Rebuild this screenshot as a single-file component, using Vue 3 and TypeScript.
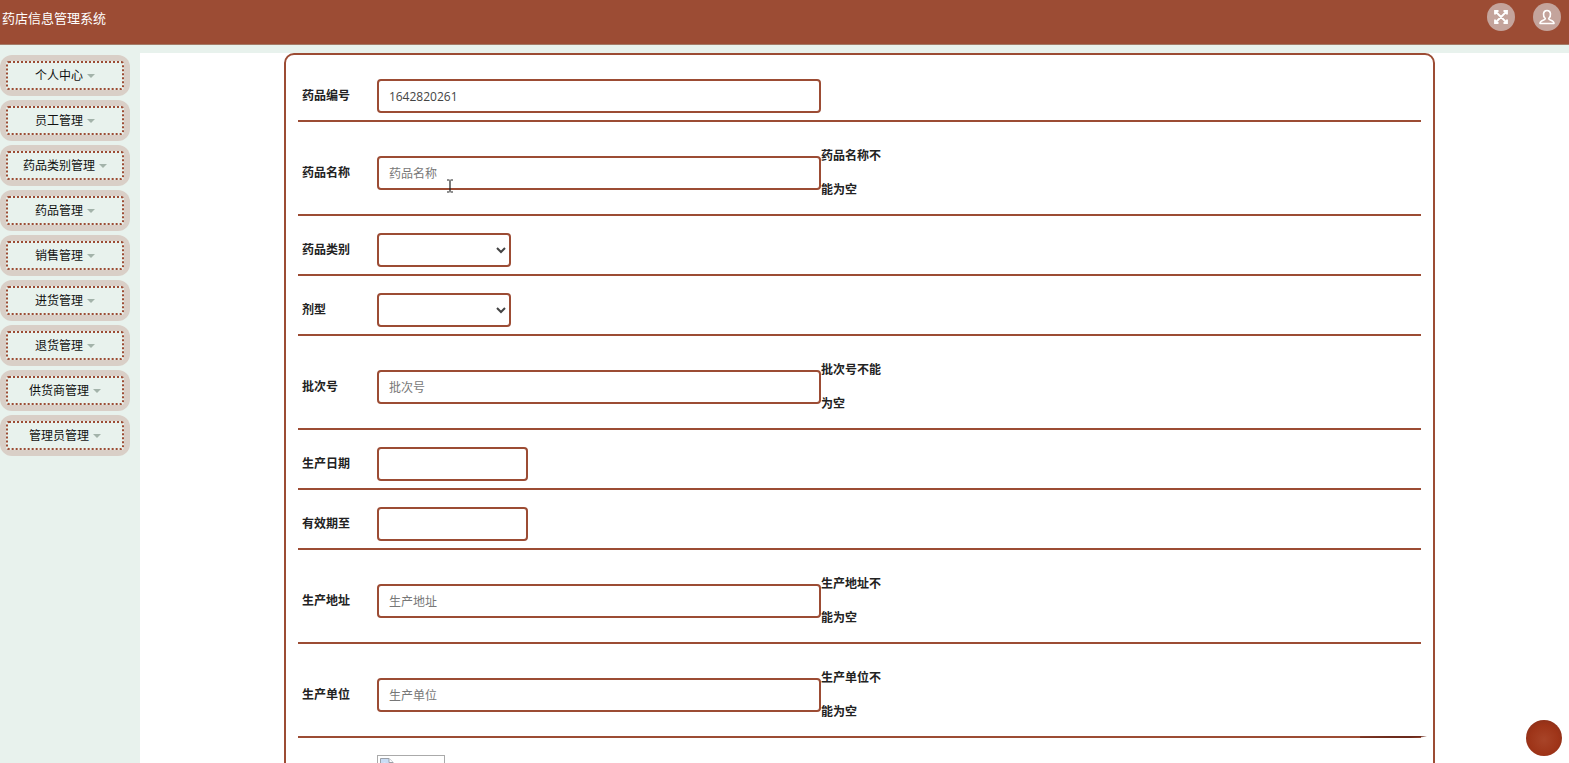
<script setup lang="ts">
import { ref } from 'vue'

interface Field {
  id: string
  label: string
  kind: 'text' | 'select' | 'date'
  value: string
  placeholder?: string
  error?: string
}

const menu: string[] = ['个人中心', '员工管理', '药品类别管理', '药品管理', '销售管理', '进货管理', '退货管理', '供货商管理', '管理员管理']

const fields = ref<Field[]>([
  { id: 'bianhao', label: '药品编号', kind: 'text', value: '1642820261' },
  { id: 'mingcheng', label: '药品名称', kind: 'text', value: '', placeholder: '药品名称', error: '药品名称不能为空' },
  { id: 'leibie', label: '药品类别', kind: 'select', value: '' },
  { id: 'jixing', label: '剂型', kind: 'select', value: '' },
  { id: 'pici', label: '批次号', kind: 'text', value: '', placeholder: '批次号', error: '批次号不能为空' },
  { id: 'shengchan', label: '生产日期', kind: 'date', value: '' },
  { id: 'youxiao', label: '有效期至', kind: 'date', value: '' },
  { id: 'dizhi', label: '生产地址', kind: 'text', value: '', placeholder: '生产地址', error: '生产地址不能为空' },
  { id: 'danwei', label: '生产单位', kind: 'text', value: '', placeholder: '生产单位', error: '生产单位不能为空' },
])
</script>

<template>
  <div class="page">
    <header class="topbar">
      <h1 class="title">药店信息管理系统</h1>
      <div class="actions">
        <button class="round" type="button" aria-label="全屏">
          <svg viewBox="0 0 28 28" width="28" height="28">
            <path d="M8 11.500V8h3.500M16.500 8H20v3.500M20 16.500V20h-3.500M11.500 20H8v-3.500M8.500 8.500l11 11M19.500 8.500l-11 11" fill="none" stroke="#fff" stroke-width="1.800" />
          </svg>
        </button>
        <button class="round" type="button" aria-label="用户">
          <svg viewBox="0 0 28 28" width="28" height="28">
            <path d="M12.300 15.500C9.800 13.500 9.500 7.500 14 7.500s4.200 6 1.700 8c0 2.200 5.300 1.500 5.300 5H7c0-3.500 5.300-2.800 5.300-5z" fill="none" stroke="#fff" stroke-width="1.600" stroke-linejoin="round" />
          </svg>
        </button>
      </div>
    </header>

    <div class="body">
      <nav class="sidebar">
        <button v-for="item in menu" :key="item" class="menu-item" type="button">
          <span class="menu-inner">{{ item }}<i class="caret"></i></span>
        </button>
      </nav>

      <main class="content">
        <form class="card" @submit.prevent>
          <div v-for="f in fields" :key="f.id" class="row">
            <label class="label" :for="f.id">{{ f.label }}</label>
            <select v-if="f.kind === 'select'" :id="f.id" v-model="f.value" class="control select"><option value=""></option></select>
            <input v-else :id="f.id" v-model="f.value" type="text" class="control" :class="f.kind" :placeholder="f.placeholder" />
            <span v-if="f.error" class="error">{{ f.error }}</span>
            <svg v-if="f.id === 'mingcheng'" class="pointer" viewBox="0 0 8 14" width="8" height="14">
              <path d="M1 1h2.500M4.500 1H7M4 1.500v11M1 13h2.500M4.500 13H7" fill="none" stroke="#222" stroke-width="1.200" />
            </svg>
            <svg v-if="f.id === 'danwei'" class="stroke" viewBox="0 0 68 4" width="68" height="4">
              <path d="M0 1.500L30 1 60 1l7 .8L50 3 0 2.800z" fill="#6b2a1c" />
            </svg>
          </div>
          <div class="row image-row">
            <span class="label"></span>
            <span class="thumb" role="img" aria-label="图片">
              <svg viewBox="0 0 16 16" width="16" height="16">
                <path d="M1.500 1.500h8.500l4 4v9H1.500z" fill="#c9dcf5" stroke="#9aa0a8" />
                <path d="M10 1.500v4h4" fill="#fff" stroke="#9aa0a8" />
                <path d="M3 8c0-3 5-3 5 0z" fill="#fff" />
                <path d="M2 14l5-5 7 5z" fill="#63a945" />
              </svg>
            </span>
          </div>
        </form>
      </main>
    </div>

    <button class="ball" type="button" aria-label="快捷操作"></button>
  </div>
</template>

<style>
body {
  margin: 0;
}
</style>

<style scoped>
.page {
  display: flex;
  flex-direction: column;
  height: 100vh;
  overflow: hidden;
  background: #e8f2ed;
  color: #222;
  font: 12px/34px "Open Sans", "Noto Sans CJK SC", sans-serif;
}
.page * {
  box-sizing: border-box;
}
.topbar {
  display: flex;
  flex: none;
  justify-content: space-between;
  align-items: flex-start;
  height: 45px;
  padding: 3px 8px 0 2px;
  background: #9c4c34;
  border-bottom: 1px solid #a47c68;
}
.title {
  margin: 0;
  color: #fff;
  font-size: 13px;
  font-weight: 400;
  line-height: 30px;
}
.actions {
  display: flex;
  gap: 18px;
}
.round {
  width: 28px;
  height: 28px;
  padding: 0;
  border: 0;
  border-radius: 50%;
  background: #c4a49c;
}
.round svg {
  display: block;
}
.body {
  display: flex;
  flex: 1;
  min-height: 0;
  padding-top: 8px;
}
.sidebar {
  display: flex;
  flex: none;
  flex-direction: column;
  gap: 4px;
  width: 140px;
  padding: 2px 10px 0 0;
}
.menu-item {
  height: 41px;
  padding: 6px;
  border: 0;
  border-radius: 12px;
  background: #d9cfc7;
  color: #111;
  font: inherit;
}
.menu-inner {
  display: flex;
  align-items: center;
  justify-content: center;
  height: 29px;
  gap: 4px;
  border: 2px dotted #9c4c34;
  border-radius: 3px;
  background: #e8f2ed;
}
.caret {
  width: 0;
  border: 4px solid transparent;
  border-top-color: #a3b3aa;
  border-bottom: 0;
}
.content {
  flex: 1;
  min-width: 0;
  background: #fff;
}
.card {
  width: calc(80% + 8px);
  margin-left: calc(10% + 1px);
  padding: 7px 12px;
  border: 2px solid #9c4c34;
  border-radius: 10px;
}
.row {
  position: relative;
  display: flex;
  align-items: center;
  padding: 17px 4px 7px;
  border-bottom: 2px solid #9c4c34;
}
.label {
  flex: none;
  width: 75px;
  font-weight: 700;
}
.control {
  height: 34px;
  padding: 0 10px;
  border: 2px solid #9c4c34;
  border-radius: 4px;
  background: #fff;
  color: #444;
  font: inherit;
  line-height: 20px;
}
.control::placeholder {
  color: #777;
  opacity: 1;
}
.text {
  width: 444px;
}
.date {
  width: 151px;
}
.select {
  width: 134px;
  padding: 0;
}
.error {
  width: 68px;
  font-weight: 700;
}
.pointer {
  position: absolute;
  left: 148px;
  top: 57px;
}
.stroke {
  position: absolute;
  right: -7px;
  bottom: -3px;
}
.image-row {
  align-items: flex-start;
}
.thumb {
  width: 68px;
  height: 68px;
  border: 1px solid #aaa;
}
.thumb svg {
  display: block;
  margin: 1px;
}
.ball {
  position: fixed;
  right: 7px;
  bottom: 7px;
  width: 36px;
  height: 36px;
  padding: 0;
  border: 0;
  border-radius: 50%;
  background: radial-gradient(circle at 50% 55%, #a84428, #9e3418 55%, #7c2c1c);
}
</style>
